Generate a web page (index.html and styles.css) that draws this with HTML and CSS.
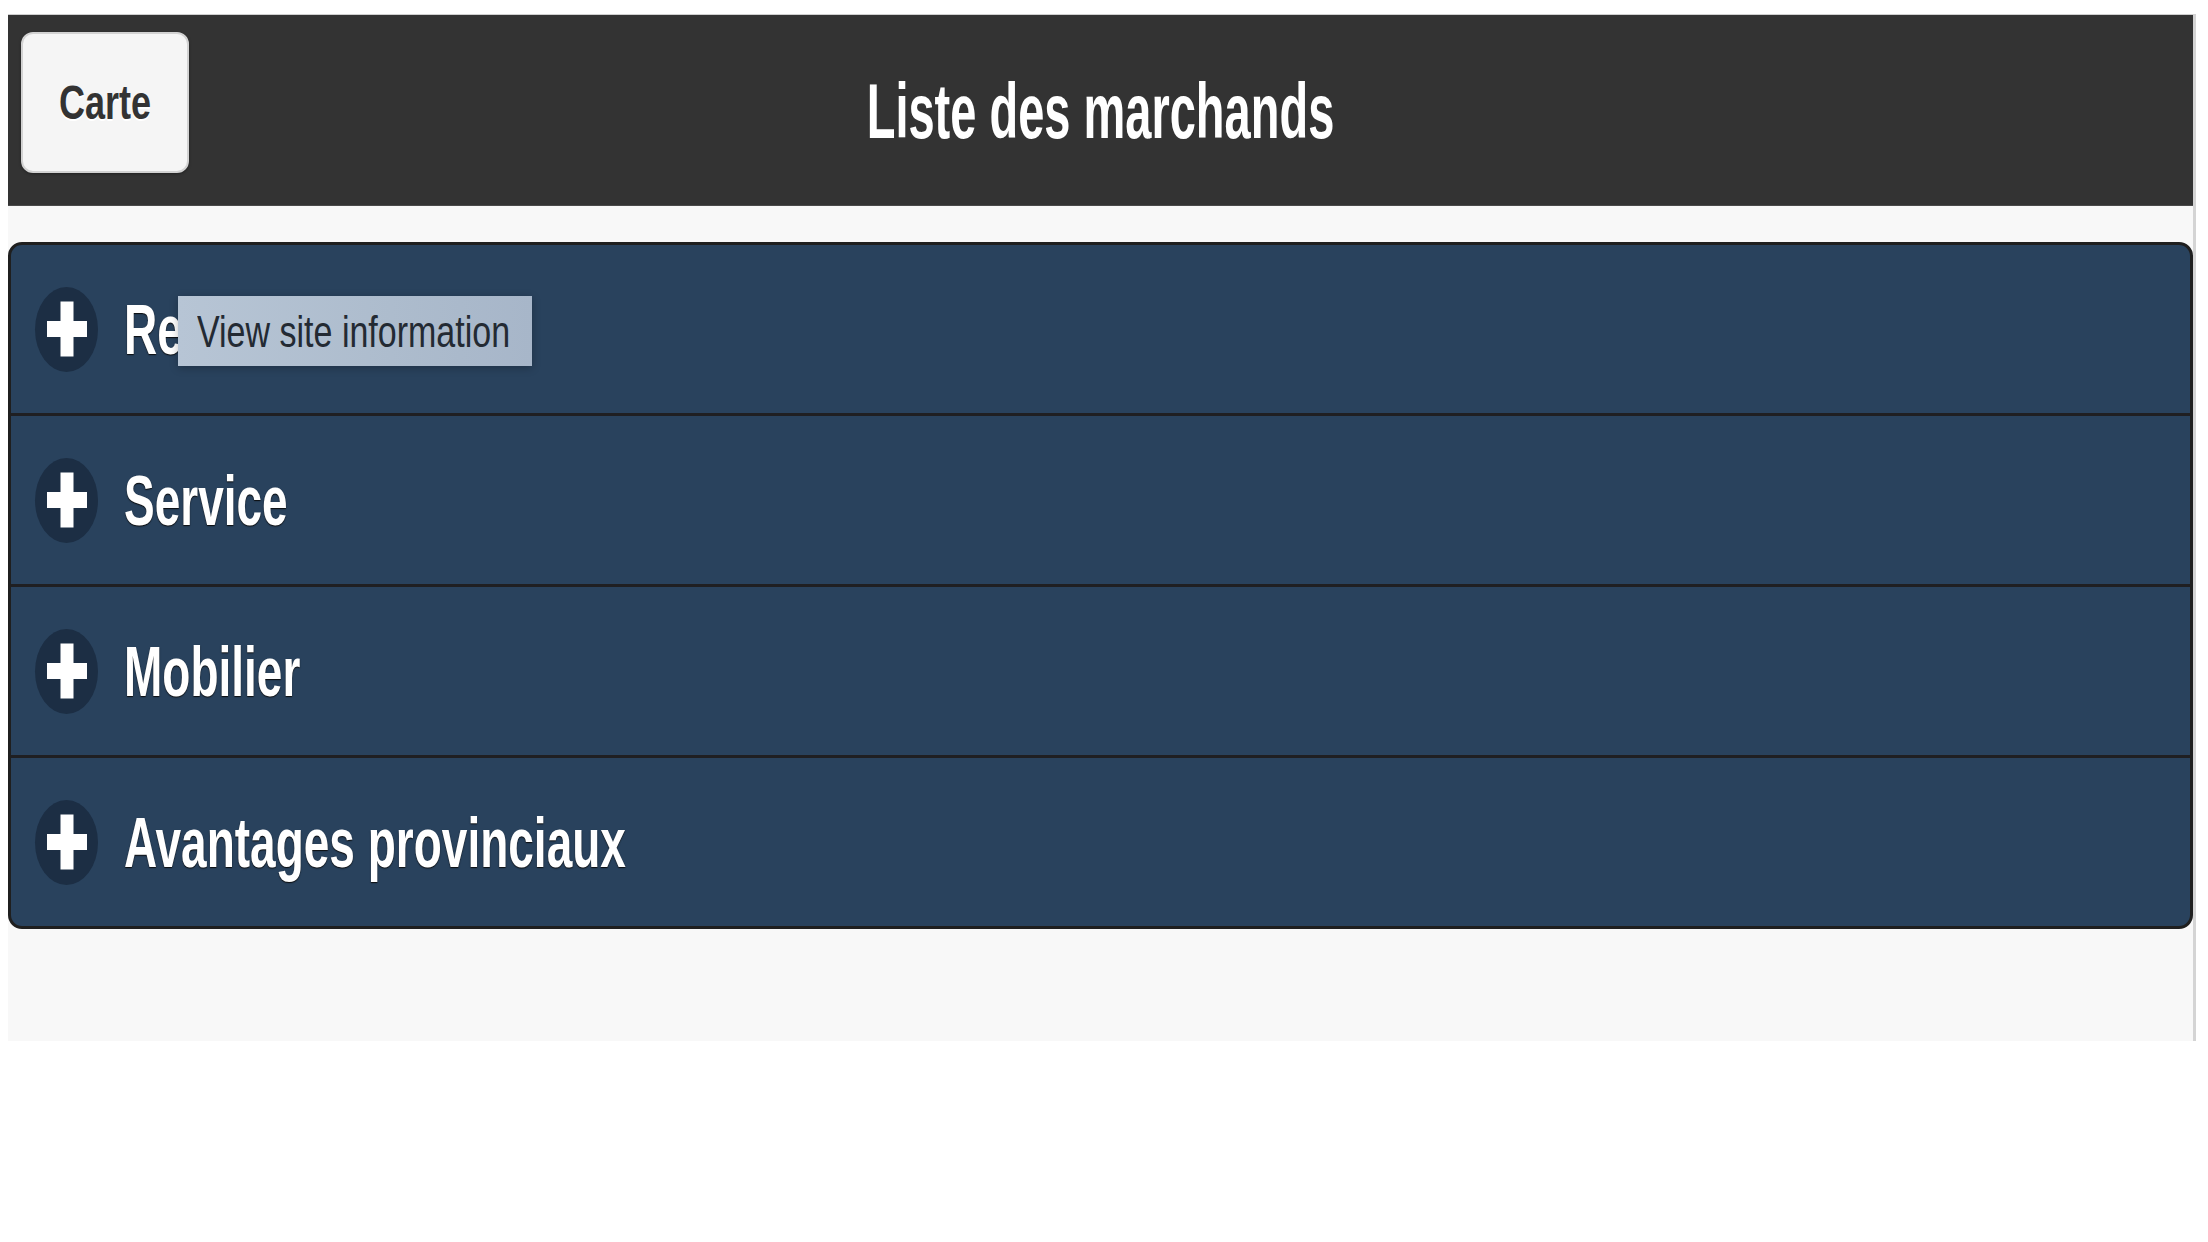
FILE: index.html
```html
<!DOCTYPE html>
<html lang="fr">
<head>
<meta charset="utf-8">
<title>Liste des marchands</title>
<link rel="stylesheet" href="styles.css">
</head>
<body>
<div class="page">
  <header class="header">
    <button class="btn-carte"><span class="txt">Carte</span></button>
    <h1 class="title"><span class="txt">Liste des marchands</span></h1>
  </header>
  <main class="content">
    <div class="panel">
      <div class="row"><span class="plus"></span><span class="label">Re</span></div>
      <div class="row"><span class="plus"></span><span class="label">Service</span></div>
      <div class="row"><span class="plus"></span><span class="label">Mobilier</span></div>
      <div class="row"><span class="plus"></span><span class="label">Avantages provinciaux</span></div>
      <div class="tooltip"><span class="tip-txt">View site information</span></div>
    </div>
  </main>
</div>
</body>
</html>
```
FILE: styles.css
```css
html, body {
  margin: 0;
  padding: 0;
  background: #ffffff;
  font-family: "Liberation Sans", Arial, sans-serif;
}

.page {
  margin: 14px 0 0 8px;
  width: 2185px;
  border-right: 3px solid #d4d4d4;
}

.header {
  position: relative;
  height: 190px;
  background: #333333;
  border-top: 1px solid #cfcfcf;
  display: flex;
  align-items: center;
  justify-content: center;
}

.btn-carte {
  position: absolute;
  left: 13px;
  top: 17px;
  width: 168px;
  height: 141px;
  margin: 0;
  padding: 0;
  background: #f5f5f5;
  border: 2px solid #d2d2d2;
  border-radius: 12px;
  box-shadow: 0 1px 3px rgba(0,0,0,0.35);
  color: #333333;
  font-family: "Liberation Sans", Arial, sans-serif;
  font-weight: bold;
  font-size: 36px;
  display: flex;
  align-items: center;
  justify-content: center;
}

.btn-carte .txt {
  display: inline-block;
  transform: scaleY(1.36);
  text-shadow: 0 1px 0 #ffffff;
}

.title {
  margin: 0;
  color: #ffffff;
  font-size: 47px;
  font-weight: bold;
  line-height: 1;
}

.title .txt {
  display: inline-block;
  transform: scaleY(1.66);
}

.content {
  background: #f8f8f8;
  padding: 36px 0 112px 0;
  border-top: 1px solid #4a4a4a;
}

.panel {
  position: relative;
  background: #29425d;
  border: 3px solid #1f1f1f;
  border-radius: 14px;
  overflow: hidden;
}

.row {
  height: 168px;
  display: flex;
  align-items: center;
  padding-left: 24px;
  border-top: 3px solid #1f1f22;
}

.row:first-child {
  border-top: none;
}

.plus {
  position: relative;
  width: 63px;
  height: 85px;
  border-radius: 50%;
  background: #1c2e44;
  flex: none;
}

.plus::before,
.plus::after {
  content: "";
  position: absolute;
  background: #ffffff;
  left: 50%;
  top: 50%;
  transform: translate(-50%, -50%);
}

.plus::before {
  width: 13px;
  height: 55px;
}

.plus::after {
  width: 40px;
  height: 16px;
}

.label {
  display: inline-block;
  margin-left: 26px;
  color: #ffffff;
  font-size: 46px;
  font-weight: bold;
  line-height: 1;
  transform: scaleY(1.55);
  text-shadow: 0 1px 1px #0a0a0a;
}

.tooltip {
  position: absolute;
  left: 167px;
  top: 51px;
  width: 354px;
  height: 70px;
  background: linear-gradient(90deg, #b7c5d5 0%, #adbccd 60%, #a7b6c9 100%);
  box-shadow: 0 2px 8px rgba(0,0,0,0.25);
  display: flex;
  align-items: center;
}

.tip-txt {
  display: inline-block;
  margin-left: 19px;
  color: #232a33;
  font-size: 34px;
  line-height: 1;
  transform: scaleY(1.3);
  white-space: nowrap;
}
```
